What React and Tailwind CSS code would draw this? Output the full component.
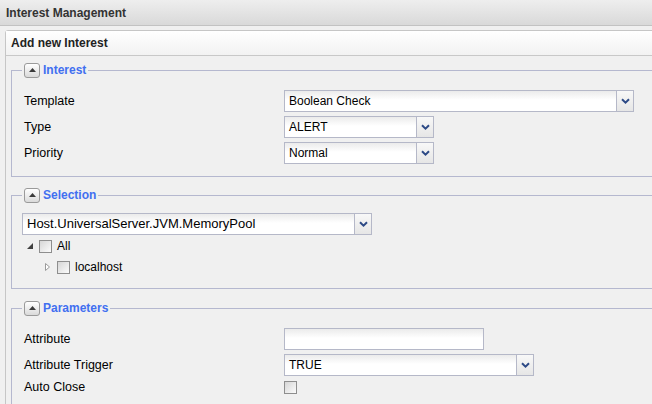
import React from "react";

function Chevron() {
  return (
    <svg width="9" height="6" viewBox="0 0 9 6">
      <path d="M1 1.2 L4.5 4.6 L8 1.2" fill="none" stroke="#2d4a86" strokeWidth="2" />
    </svg>
  );
}

function SelectBox({ value, className = "", textClass = "text-[12px]" }) {
  return (
    <div className={`flex h-[22px] border border-[#b5b8c8] bg-white ${className}`}>
      <div className={`flex-1 flex items-center pl-[4px] bg-[linear-gradient(#ebebeb,#ffffff_45%)] text-black ${textClass}`}>
        {value}
      </div>
      <div className="w-[17px] border-l border-[#b5b8c8] bg-[linear-gradient(#f8f8f8,#e6e6e6)] flex items-center justify-center">
        <Chevron />
      </div>
    </div>
  );
}

function Checkbox() {
  return (
    <span className="inline-block w-[13px] h-[13px] border border-[#8e8e8e] bg-[linear-gradient(135deg,#d6d6d6,#fbfbfb)]"></span>
  );
}

function Fieldset({ title, className = "", children }) {
  return (
    <fieldset className={`border border-[#b5b8cf] px-[10px] ${className}`}>
      <legend className="px-[2px]">
        <div className="flex items-center h-[16px] gap-[3px]">
          <span className="w-[16px] h-[15px] rounded-[3px] border border-[#9a9a9a] bg-[linear-gradient(#ffffff,#dadada)] flex items-center justify-center">
            <svg width="7" height="4" viewBox="0 0 7 4">
              <path d="M0 4 L3.5 0 L7 4 Z" fill="#3a3a3a" />
            </svg>
          </span>
          <span className="font-bold text-[12px] text-[#416ff0]">{title}</span>
        </div>
      </legend>
      {children}
    </fieldset>
  );
}

export default function App() {
  return (
    <div className="w-[652px] h-[404px] overflow-hidden bg-[#f0f0f0] font-['Liberation_Sans',Arial,sans-serif] text-[12px] text-black">
      {/* top header */}
      <div className="h-[26px] border-b border-[#c2c2c2] bg-[linear-gradient(#eeeeee,#d9d9d9)] flex items-center pl-[6px] font-bold text-[#333]">
        Interest Management
      </div>

      {/* panel */}
      <div className="mt-[4px] ml-[5px] w-[700px] border border-[#c6c6c6] rounded-tl-[3px]">
        <div className="h-[25px] border-b border-[#c8c8c8] bg-[linear-gradient(#ffffff,#f2f2f2)] flex items-center pl-[5px] font-bold text-[#222]">
          Add new Interest
        </div>

        <div className="pl-[5px] pr-[5px] pt-[6px] pb-[20px] bg-[#f0f0f0]">
          <Fieldset title="Interest">
            <div className="pl-[2px] pt-[12px] pb-[12px] grid grid-cols-[260px_auto] gap-y-[4px] items-center text-[12.5px]">
              <span>Template</span>
              <SelectBox value="Boolean Check" className="w-[350px]" />
              <span>Type</span>
              <SelectBox value="ALERT" className="w-[150px]" />
              <span>Priority</span>
              <SelectBox value="Normal" className="w-[150px]" />
            </div>
          </Fieldset>

          <Fieldset title="Selection" className="mt-[10px]">
            <div className="pt-[10px] pb-[11px]">
              <SelectBox value="Host.UniversalServer.JVM.MemoryPool" className="w-[350px]" textClass="text-[13px]" />
              <div className="mt-[1px] flex flex-col gap-[1px]">
                <div className="h-[20px] flex items-center pl-[5px]">
                  <svg width="6" height="6" viewBox="0 0 6 6">
                    <path d="M6 0 L6 6 L0 6 Z" fill="#404040" />
                  </svg>
                  <span className="ml-[6px] flex"><Checkbox /></span>
                  <span className="ml-[5px]">All</span>
                </div>
                <div className="h-[20px] flex items-center pl-[23px]">
                  <svg width="5" height="8" viewBox="0 0 5 8">
                    <path d="M0.5 0.5 L4.5 4 L0.5 7.5 Z" fill="#ffffff" stroke="#9a9a9a" strokeWidth="1" />
                  </svg>
                  <span className="ml-[7px] flex"><Checkbox /></span>
                  <span className="ml-[5px]">localhost</span>
                </div>
              </div>
            </div>
          </Fieldset>

          <Fieldset title="Parameters" className="mt-[11px]">
            <div className="pl-[2px] pt-[12px] pb-[12px] grid grid-cols-[260px_auto] items-center text-[12.5px]">
              <span>Attribute</span>
              <div className="w-[200px] h-[22px] border border-[#b5b8c8] bg-[linear-gradient(#ebebeb,#ffffff_45%)]"></div>
              <span className="mt-[4px]">Attribute Trigger</span>
              <SelectBox value="TRUE" className="w-[250px] mt-[4px]" />
              <span className="mt-[5px] leading-none">Auto Close</span>
              <span className="mt-[5px] flex"><Checkbox /></span>
            </div>
          </Fieldset>
        </div>
      </div>
    </div>
  );
}
